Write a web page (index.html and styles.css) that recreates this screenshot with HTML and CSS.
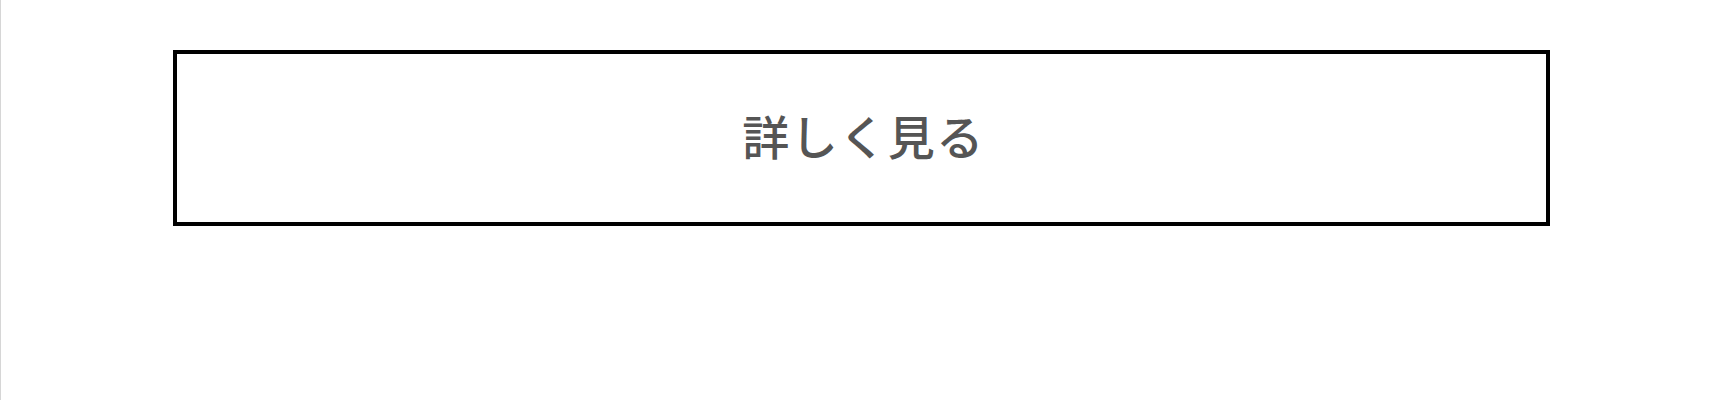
FILE: index.html
```html
<!DOCTYPE html>
<html lang="ja">
<head>
<meta charset="utf-8">
<link rel="stylesheet" href="styles.css">
</head>
<body>
<div class="page">
  <a class="more-btn" href="#">詳しく見る</a>
</div>
</body>
</html>
```
FILE: styles.css
```css
html, body {
  margin: 0;
  padding: 0;
  background: #fff;
}
.page {
  border-left: 1px solid #d6d6d6;
  min-height: 400px;
  box-sizing: border-box;
  padding-top: 50px;
}
.more-btn {
  display: flex;
  align-items: center;
  justify-content: center;
  width: 80%;
  height: 176px;
  margin: 0 auto;
  box-sizing: border-box;
  border: 4px solid #000;
  color: #555;
  text-decoration: none;
  font-family: "Noto Sans CJK JP", "Noto Sans", sans-serif;
  font-size: 47px;
  font-weight: 500;
  line-height: 1;
  letter-spacing: 1.5px;
  padding-bottom: 7px;
  padding-left: 4px;
}
```
